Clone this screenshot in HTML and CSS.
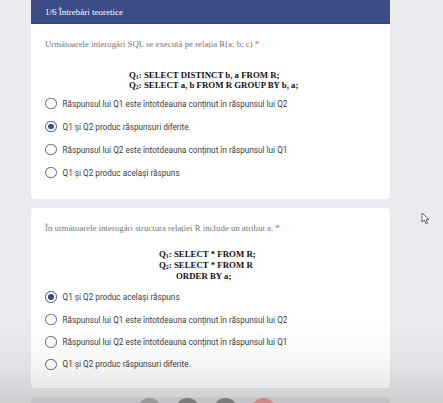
FILE: index.html
```html
<!DOCTYPE html>
<html lang="ro">
<head>
<meta charset="utf-8">
<title>Întrebări teoretice</title>
<link rel="stylesheet" href="styles.css">
</head>
<body>
<main class="form">
  <section class="card">
    <header class="card-head">1/6 Întrebări teoretice</header>
    <div class="card-body">
      <p class="question">Următoarele interogări SQL se execută pe relația R(a; b; c) <span class="req">*</span></p>
      <div class="sql sql-1">
        <div>Q<sub>1</sub>: SELECT DISTINCT b, a FROM R;</div>
        <div>Q<sub>2</sub>: SELECT a, b FROM R GROUP BY b, a;</div>
      </div>
      <ul class="options">
        <li class="option"><span class="radio"></span>Răspunsul lui Q1 este întotdeauna conținut în răspunsul lui Q2</li>
        <li class="option"><span class="radio checked"></span>Q1 și Q2 produc răspunsuri diferite.</li>
        <li class="option"><span class="radio"></span>Răspunsul lui Q2 este întotdeauna conținut în răspunsul lui Q1</li>
        <li class="option"><span class="radio"></span>Q1 și Q2 produc același răspuns</li>
      </ul>
    </div>
  </section>

  <section class="card card-2">
    <div class="card-body body-2">
      <p class="question">În următoarele interogări structura relației R include un atribut a. <span class="req">*</span></p>
      <div class="sql sql-2">
        <div>Q<sub>1</sub>: SELECT * FROM R;</div>
        <div>Q<sub>2</sub>: SELECT * FROM R</div>
        <div class="indent">ORDER BY a;</div>
      </div>
      <ul class="options options-2">
        <li class="option"><span class="radio checked"></span>Q1 și Q2 produc același răspuns</li>
        <li class="option"><span class="radio"></span>Răspunsul lui Q1 este întotdeauna conținut în răspunsul lui Q2</li>
        <li class="option"><span class="radio"></span>Răspunsul lui Q2 este întotdeauna conținut în răspunsul lui Q1</li>
        <li class="option"><span class="radio"></span>Q1 și Q2 produc răspunsuri diferite.</li>
      </ul>
    </div>
  </section>

  <div class="bottom-bar">
    <span class="dot dot-light"></span>
    <span class="dot dot-dark"></span>
    <span class="dot dot-dark"></span>
    <span class="dot dot-red"></span>
  </div>
</main>

<svg class="cursor" width="9" height="13" viewBox="0 0 9 13">
  <path d="M1 1 L1 10 L3.3 8 L5 11.8 L6.6 11.1 L5 7.5 L8 7.4 Z" fill="#fff" stroke="#555" stroke-width="0.9" stroke-linejoin="round"/>
</svg>
<div class="shade"></div>
</body>
</html>
```

FILE: styles.css
```css
html, body {
  margin: 0;
  padding: 0;
}
body {
  background: #e9ebee;
  width: 443px;
  height: 403px;
  overflow: hidden;
  position: relative;
  font-family: Roboto, "Liberation Sans", sans-serif;
}
.form {
  width: 359px;
  margin-left: 31px;
  display: flex;
  flex-direction: column;
}
.card {
  background: #fff;
  border-radius: 0 0 4px 4px;
}
.card-2 {
  margin-top: 9px;
  border-radius: 4px;
}
.card-head {
  background: #3b4c87;
  color: #fff;
  height: 24px;
  line-height: 24px;
  padding-left: 14px;
  font-family: "Liberation Serif", serif;
  font-size: 9px;
  border-bottom: 1px solid #33437a;
  box-sizing: border-box;
}
.card-body {
  padding: 13px 14px 15px 14px;
}
.body-2 {
  padding-top: 13px;
  padding-bottom: 12px;
}
.question {
  margin: 0;
  font-family: "Liberation Serif", serif;
  font-size: 8.8px;
  line-height: 14px;
  color: #767676;
}
.req {
  color: #d9534f;
}
.sql {
  font-family: "Liberation Serif", serif;
  font-weight: bold;
  font-size: 8.8px;
  color: #111;
  line-height: 9.5px;
}
.sql sub {
  font-size: 6px;
  vertical-align: -1px;
  line-height: 0;
}
.sql-1 {
  margin: 20px 0 0 84px;
}
.sql-2 {
  margin: 14px 0 0 114px;
  line-height: 11px;
}
.indent {
  padding-left: 17px;
}
.options {
  list-style: none;
  margin: 2px 0 0 0;
  padding: 0;
}
.options-2 {
  margin-top: 4px;
}
.option {
  display: flex;
  align-items: center;
  gap: 6px;
  height: 23px;
  font-size: 8.2px;
  color: #3c3c3c;
}
.options-2 .option {
  height: 22.4px;
}
.radio {
  width: 11.5px;
  height: 11.5px;
  box-sizing: border-box;
  border: 1.3px solid #606468;
  border-radius: 50%;
  display: flex;
  align-items: center;
  justify-content: center;
  flex: none;
}
.radio.checked {
  border-color: #3b4c87;
}
.radio.checked::after {
  content: "";
  width: 5.5px;
  height: 5.5px;
  border-radius: 50%;
  background: #3b4c87;
}
.bottom-bar {
  margin-top: 9px;
  height: 30px;
  background: #dcdee1;
  border-radius: 4px 4px 0 0;
  display: flex;
  justify-content: center;
  gap: 13px;
  padding-top: 1px;
  padding-right: 8px;
  box-sizing: border-box;
}
.dot {
  width: 25px;
  height: 25px;
  border-radius: 50%;
}
.dot-light { background: #adadad; }
.dot-dark { background: #8b8b8b; }
.dot-red { background: #e59b9b; }
.cursor {
  position: absolute;
  left: 421px;
  top: 212px;
}
.shade {
  position: absolute;
  left: 0;
  right: 0;
  top: 320px;
  bottom: 0;
  pointer-events: none;
  background: linear-gradient(to bottom, rgba(0,0,0,0) 0%, rgba(0,0,0,0.03) 50%, rgba(0,0,0,0.12) 100%);
}
```
